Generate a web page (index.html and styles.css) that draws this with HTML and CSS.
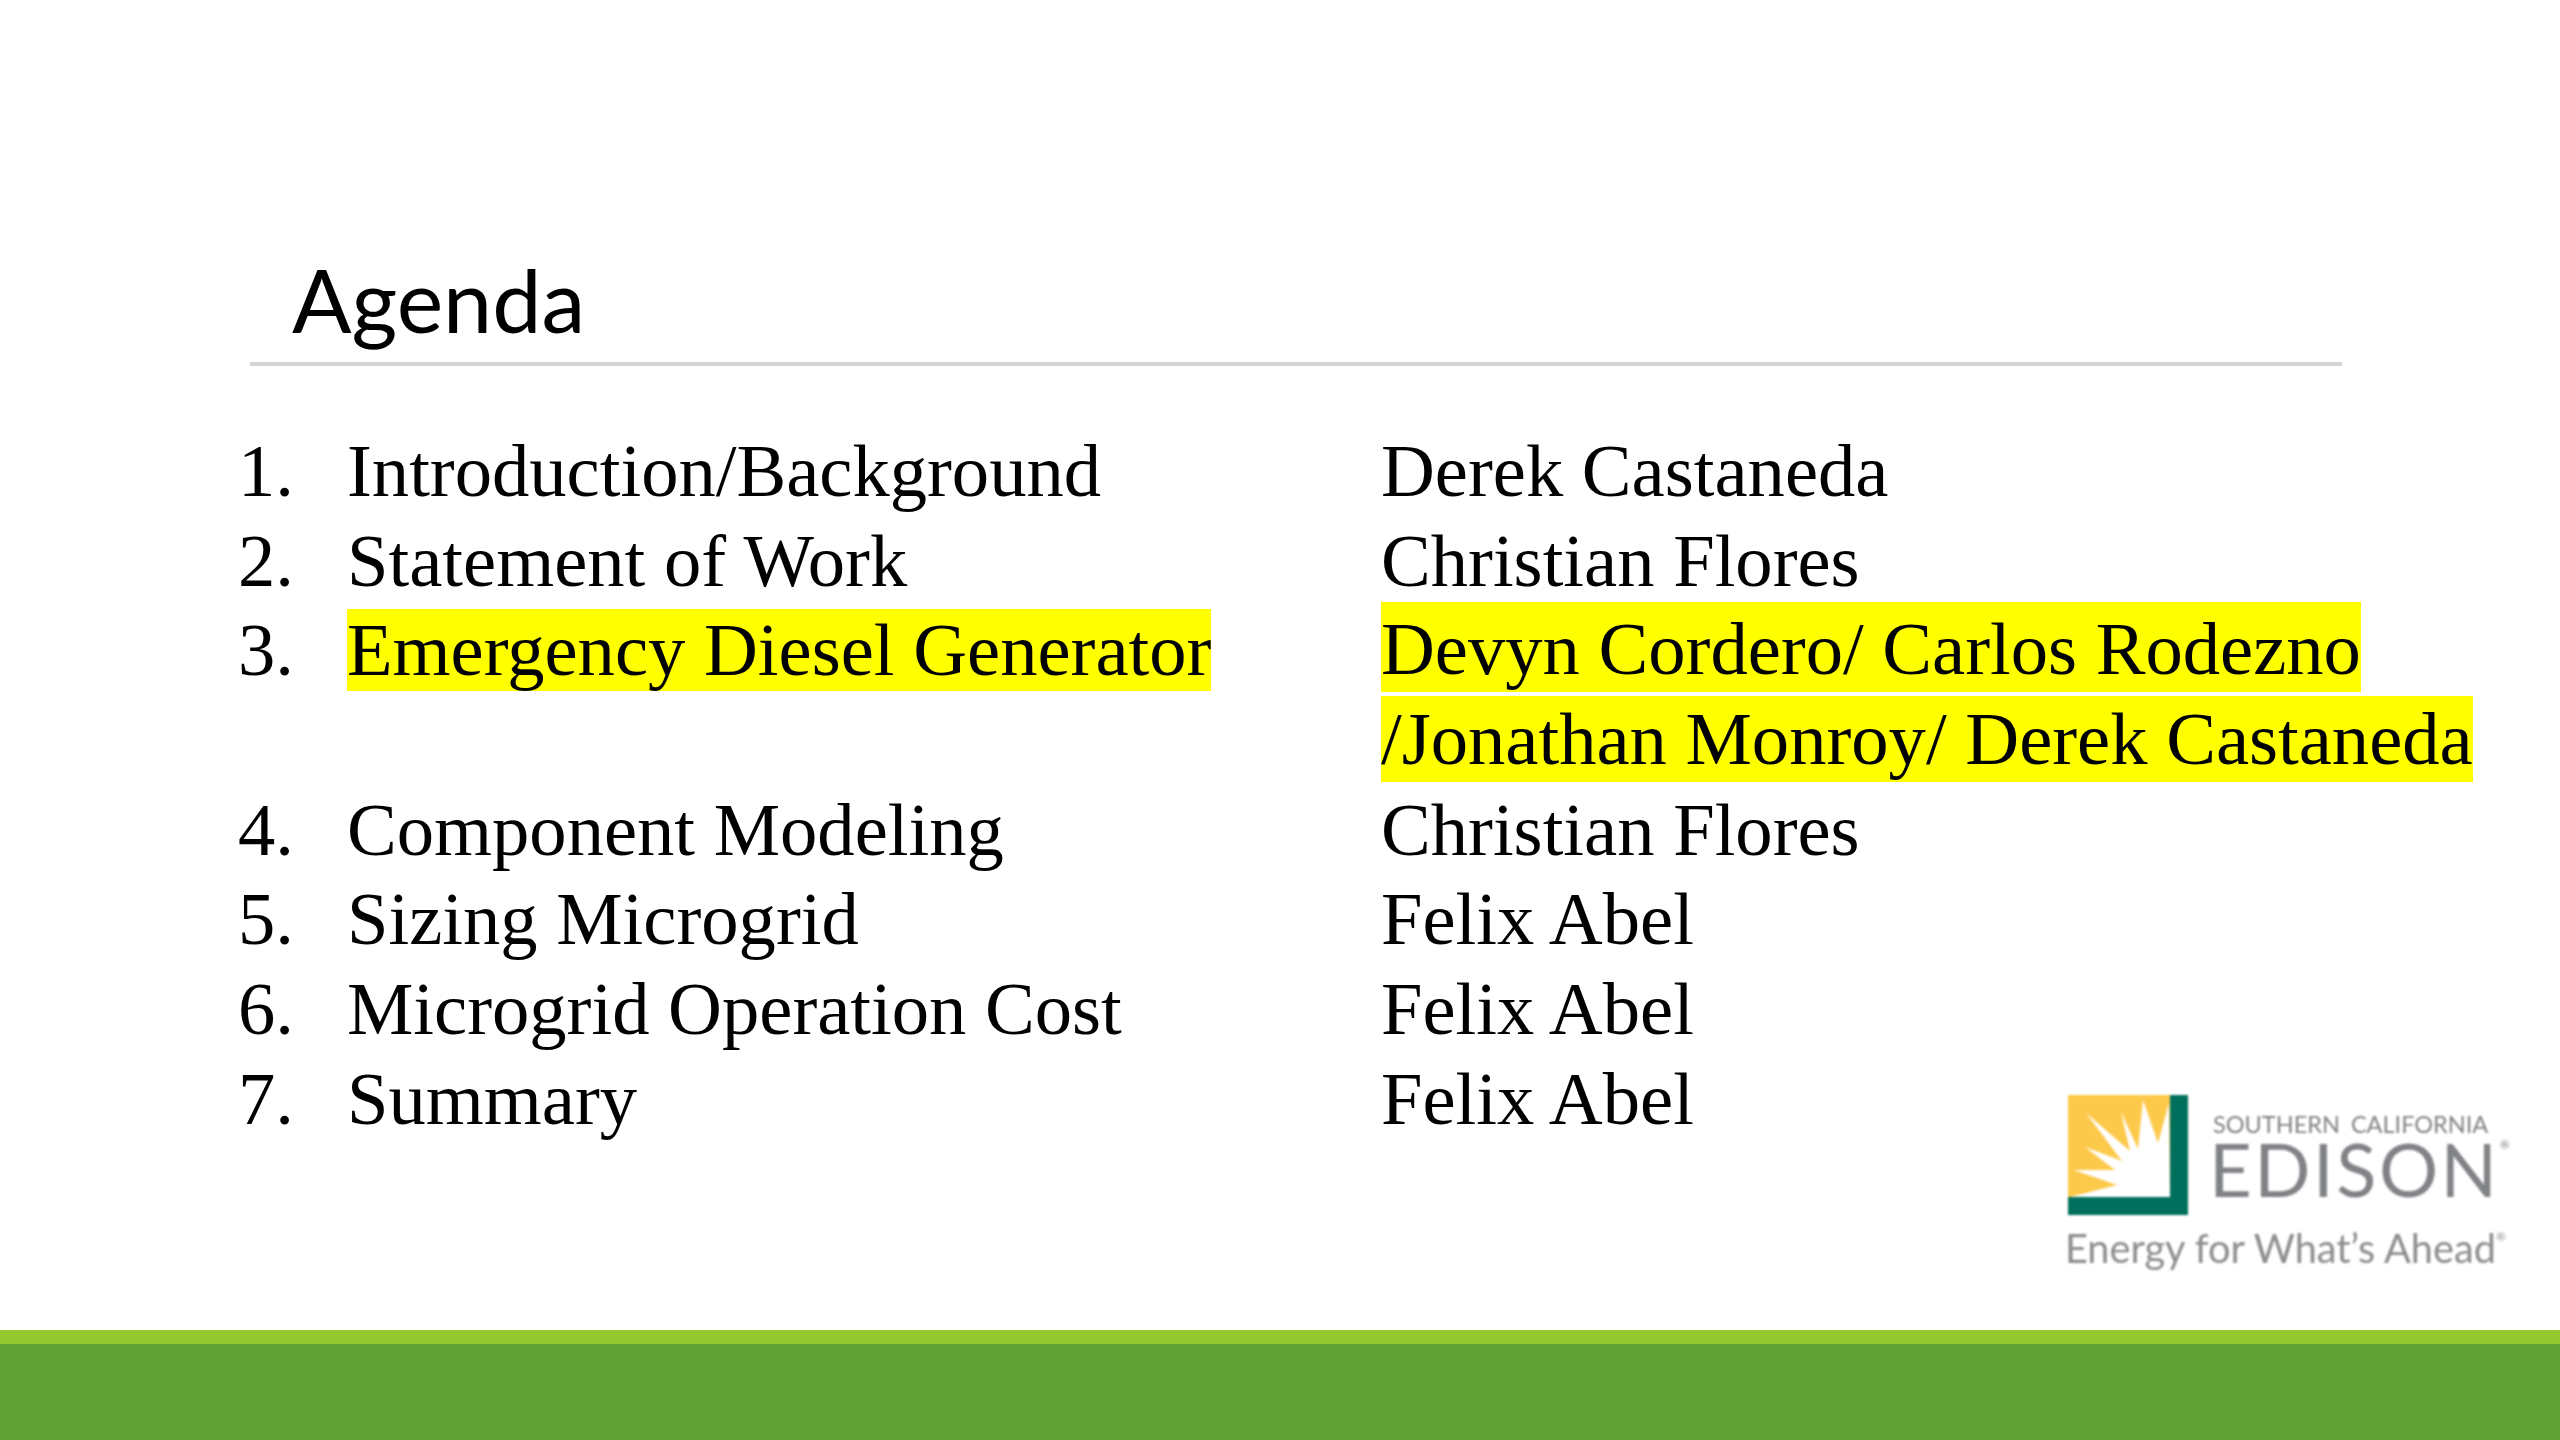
FILE: index.html
```html
<!DOCTYPE html>
<html lang="en">
<head>
<meta charset="utf-8">
<title>Agenda</title>
<link rel="stylesheet" href="styles.css">
</head>
<body>
<main class="slide">
  <header class="head">
    <h1 class="title">Agenda</h1>
  </header>
  <section class="agenda">
    <div class="num">1.</div><div class="topic">Introduction/Background</div><div class="who">Derek Castaneda</div>
    <div class="num">2.</div><div class="topic">Statement of Work</div><div class="who">Christian Flores</div>
    <div class="num tall">3.</div><div class="topic tall"><span class="mark">Emergency Diesel Generator</span></div><div class="who tall"><span class="mark mark-wide mark-first">Devyn Cordero/ Carlos Rodezno</span><br><span class="mark mark-wide">/Jonathan Monroy/ Derek Castaneda</span></div>
    <div class="num">4.</div><div class="topic">Component Modeling</div><div class="who">Christian Flores</div>
    <div class="num">5.</div><div class="topic">Sizing Microgrid</div><div class="who">Felix Abel</div>
    <div class="num">6.</div><div class="topic">Microgrid Operation Cost</div><div class="who">Felix Abel</div>
    <div class="num">7.</div><div class="topic">Summary</div><div class="who">Felix Abel</div>
  </section>
  <aside class="logo">
    <div class="logo-top">
      <svg class="logo-mark" viewBox="0 0 120 120" width="120" height="120" aria-hidden="true">
        <rect width="120" height="120" fill="#006f5b"/>
        <rect width="102" height="102" fill="#fdc94b"/>
        <polygon fill="#fff" points="101,8 90,48 75,5 70,54 53,17 62,56 18,18 54,66 17,52 47,75 6,75 49,90 2,102 102,102" />
      </svg>
      <div class="logo-words">
        <div class="logo-sce">SOUTHERN CALIFORNIA</div>
        <div class="logo-edison">EDISON<sup class="logo-r">®</sup></div>
      </div>
    </div>
    <div class="logo-tag">Energy for What’s Ahead<sup class="logo-r small">®</sup></div>
  </aside>
  <footer class="bands">
    <div class="band-light"></div>
    <div class="band-dark"></div>
  </footer>
</main>
</body>
</html>
```

FILE: styles.css
```css
html, body {
  margin: 0;
  padding: 0;
  background: #fff;
}
.slide {
  position: relative;
  width: 2560px;
  height: 1440px;
  display: flex;
  flex-direction: column;
  padding-top: 248px;
  box-sizing: border-box;
  overflow: hidden;
}
.head {
  margin-left: 250px;
  width: 2092px;
  height: 118px;
  box-sizing: border-box;
  border-bottom: 4px solid #d4d4d4;
  padding-left: 42px;
}
.title {
  margin: 0;
  font: 400 88px/103px Lato, sans-serif;
  color: #000;
  filter: blur(0.5px);
}
.agenda {
  margin-top: 61px;
  margin-left: 238px;
  display: grid;
  grid-template-columns: 109px 1034px 1100px;
  grid-auto-rows: 89.7px;
  font: 400 74.6px/89.7px "Liberation Serif", serif;
  color: #000;
  filter: blur(0.5px);
}
.tall {
  grid-row: span 2;
}
.num { grid-column: 1; }
.topic { grid-column: 2; }
.who { grid-column: 3; white-space: nowrap; }
.who.tall { margin-top: -1px; }
.mark {
  background: #ffff00;
}
.mark-wide {
  padding: 2px 0;
}
.mark-first {
  padding-top: 6px;
}
.logo {
  position: absolute;
  left: 2068px;
  top: 1095px;
  width: 440px;
  filter: blur(0.8px);
  color: #808285;
}
.logo-top {
  display: flex;
  gap: 26px;
}
.logo-mark { display: block; flex: none; }
.logo-sce {
  font: 400 23.5px/24px Lato, sans-serif;
  word-spacing: 5px;
  margin-top: 17px;
  margin-left: -1px;
  white-space: nowrap;
}
.logo-edison {
  font: 400 74px/62px Lato, sans-serif;
  letter-spacing: 2.5px;
  margin-top: 2px;
  margin-left: -5px;
  white-space: nowrap;
  position: relative;
}
.logo-r {
  font-size: 12px;
  line-height: 0;
  vertical-align: 48px;
}
.logo-r.small { vertical-align: 22px; }
.logo-tag {
  font: 400 39.7px/50px Lato, sans-serif;
  margin-top: 8px;
  margin-left: -3px;
  white-space: nowrap;
  color: #8a8c8e;
}
.bands {
  position: absolute;
  left: 0;
  right: 0;
  bottom: 0;
  display: flex;
  flex-direction: column;
}
.band-light { height: 14px; background: #93c82f; }
.band-dark { height: 96px; background: #62a136; }
```
